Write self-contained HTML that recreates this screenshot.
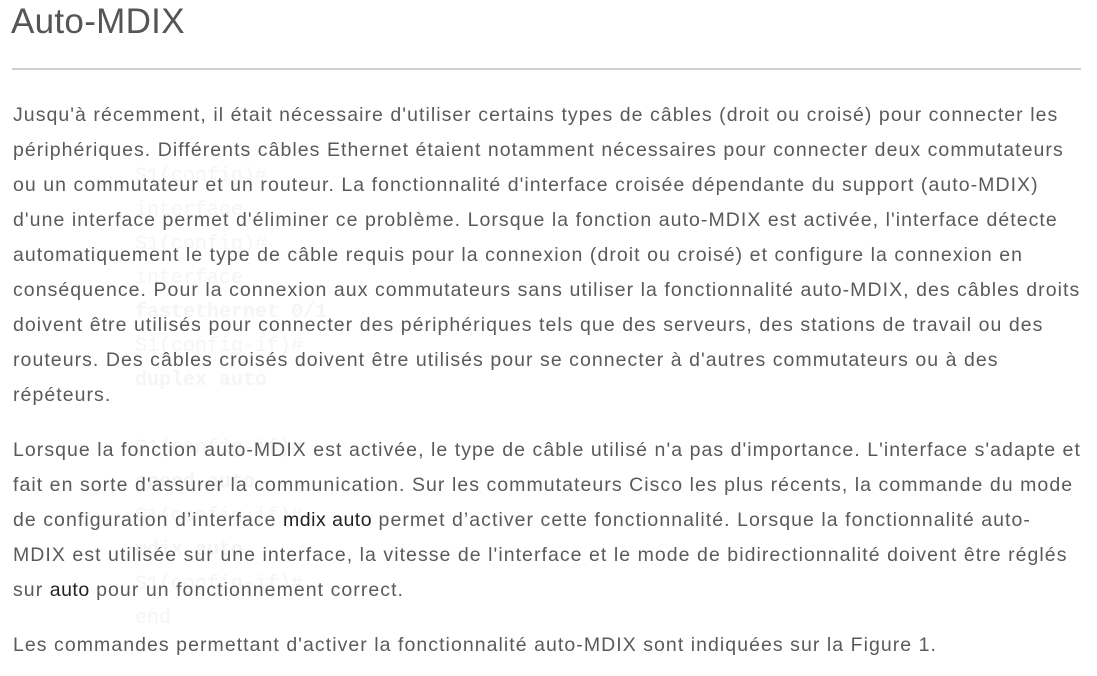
<!DOCTYPE html>
<html><head><meta charset="utf-8"><style>
html,body{margin:0;padding:0;background:#fff;width:1097px;height:676px;overflow:hidden}
body{font-family:"Liberation Sans",sans-serif;color:#555;position:relative}
.ghost{position:absolute;color:#f5f5f5;font-family:"Liberation Mono",monospace;font-size:20px;line-height:34px}
.ghost i{font-style:normal;font-weight:bold;color:#f5f5f5}
h1{position:absolute;left:11px;top:2px;margin:0;font-weight:normal;font-size:35px;color:#555;letter-spacing:0.3px}
.hr{position:absolute;left:12px;top:68px;width:1069px;height:2px;background:#d0d0d0}
.p{position:absolute;left:13px;font-size:19.5px;letter-spacing:1.05px;line-height:35px;white-space:nowrap;color:#5a5a5a}
b{font-weight:normal;color:#222;letter-spacing:0.5px}
</style></head><body>
<div class="ghost" style="left:135px;top:160px">S1(config)#<br>interface<br>S1(config)#<br>interface<br><i>fastethernet 0/1</i><br>S1(config-if)#<br><i>duplex auto</i><br><br>S1(config-if)#<br><i>speed auto</i><br>S1(config-if)#<br><i>mdix auto</i><br>S1(config-if)#<br>end</div>
<h1>Auto-MDIX</h1>
<div class="hr"></div>
<div class="p" style="top:98px">Jusqu'à récemment, il était nécessaire d'utiliser certains types de câbles (droit ou croisé) pour connecter les<br>périphériques. Différents câbles Ethernet étaient notamment nécessaires pour connecter deux commutateurs<br>ou un commutateur et un routeur. La fonctionnalité d'interface croisée dépendante du support (auto-MDIX)<br>d'une interface permet d'éliminer ce problème. Lorsque la fonction auto-MDIX est activée, l'interface détecte<br>automatiquement le type de câble requis pour la connexion (droit ou croisé) et configure la connexion en<br>conséquence. Pour la connexion aux commutateurs sans utiliser la fonctionnalité auto-MDIX, des câbles droits<br>doivent être utilisés pour connecter des périphériques tels que des serveurs, des stations de travail ou des<br>routeurs. Des câbles croisés doivent être utilisés pour se connecter à d'autres commutateurs ou à des<br>répéteurs.</div>
<div class="p" style="top:433px">Lorsque la fonction auto-MDIX est activée, le type de câble utilisé n'a pas d'importance. L'interface s'adapte et<br>fait en sorte d'assurer la communication. Sur les commutateurs Cisco les plus récents, la commande du mode<br>de configuration d’interface <b>mdix auto</b> permet d’activer cette fonctionnalité. Lorsque la fonctionnalité auto-<br>MDIX est utilisée sur une interface, la vitesse de l'interface et le mode de bidirectionnalité doivent être réglés<br>sur <b>auto</b> pour un fonctionnement correct.</div>
<div class="p" style="top:628px">Les commandes permettant d'activer la fonctionnalité auto-MDIX sont indiquées sur la Figure 1.</div>
</body></html>
